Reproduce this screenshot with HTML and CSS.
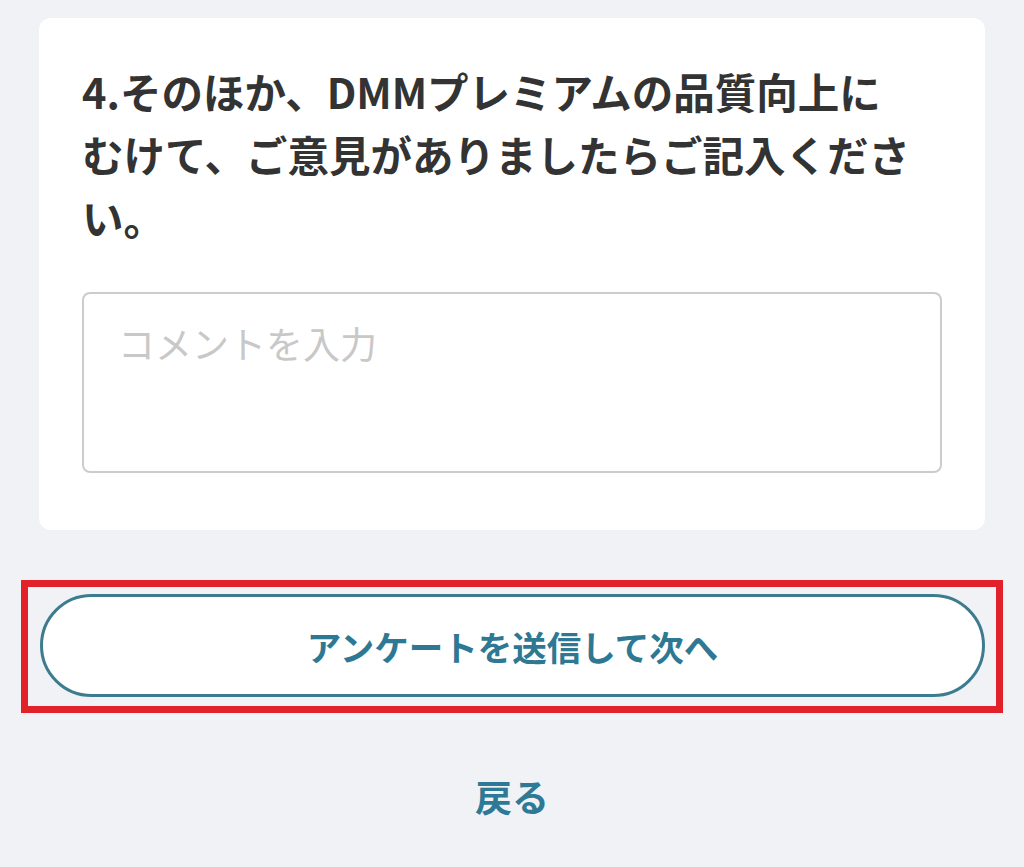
FILE: index.html
```html
<!DOCTYPE html>
<html lang="ja">
<head>
<meta charset="utf-8">
<title>アンケート</title>
<link rel="stylesheet" href="styles.css">
</head>
<body>
<main class="page">
  <section class="card">
    <h2 class="question">4.そのほか、DMMプレミアムの品質向上に<br>むけて、ご意見がありましたらご記入ください。</h2>
    <textarea class="comment" placeholder="コメントを入力"></textarea>
  </section>
  <div class="highlight">
    <button class="submit" type="button">アンケートを送信して次へ</button>
  </div>
  <div class="back-row">
    <a class="back" href="#">戻る</a>
  </div>
</main>
</body>
</html>
```
FILE: styles.css
```css
html, body {
  margin: 0;
  padding: 0;
}
body {
  background: #f0f2f6;
  font-family: "Noto Sans CJK JP", "Noto Sans", sans-serif;
  color: #333333;
}
.page {
  padding: 18px 39px 0 39px;
}
.card {
  background: #ffffff;
  border-radius: 12px;
  padding: 42px 43px 57px 43px;
}
.question {
  margin: 0;
  font-size: 41.5px;
  line-height: 63px;
  font-weight: 700;
  color: #333333;
}
.comment {
  display: block;
  box-sizing: border-box;
  width: 100%;
  height: 181px;
  margin-top: 43px;
  border: 2px solid #cccccc;
  border-radius: 8px;
  padding: 22px 34px;
  font-family: "Noto Sans CJK JP", "Noto Sans", sans-serif;
  font-size: 37px;
  line-height: 55px;
  color: #333333;
  resize: none;
  outline: none;
  background: #ffffff;
}
.comment::placeholder {
  color: #c8c8c8;
}
.highlight {
  margin: 50px -18px 0 -18px;
  border: 7px solid #e1222b;
  padding: 7px 11px 9px 12px;
}
.submit {
  display: block;
  box-sizing: border-box;
  width: 100%;
  height: 103px;
  border: 3px solid #3d7c8f;
  border-radius: 52px;
  background: #ffffff;
  color: #2e7893;
  font-family: "Noto Sans CJK JP", "Noto Sans", sans-serif;
  font-size: 34.5px;
  font-weight: 700;
  cursor: pointer;
}
.back-row {
  display: flex;
  justify-content: center;
  margin-top: 56px;
}
.back {
  font-size: 37px;
  line-height: 54px;
  font-weight: 700;
  color: #2e7a96;
  text-decoration: none;
}
```
